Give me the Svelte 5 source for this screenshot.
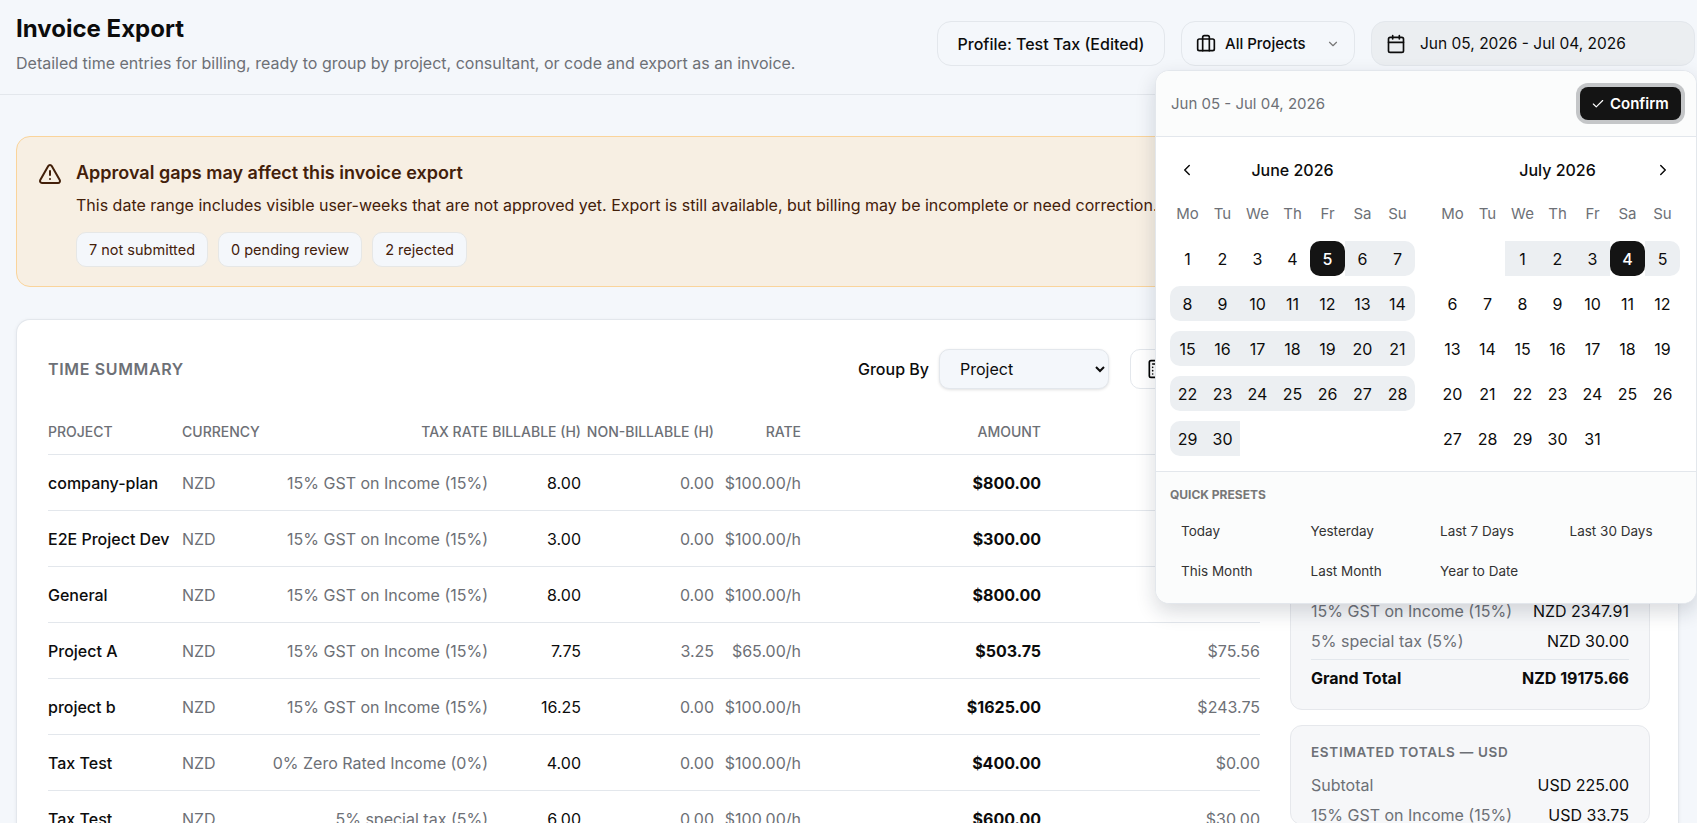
<script lang="ts">
  type Row = { name: string; tax: string; billable: string; nonBillable: string; rate: string; amount: string; taxAmount: string };

  const rows: Row[] = [
    { name: 'company-plan', tax: '15% GST on Income (15%)', billable: '8.00', nonBillable: '0.00', rate: '$100.00/h', amount: '$800.00', taxAmount: '$120.00' },
    { name: 'E2E Project Dev', tax: '15% GST on Income (15%)', billable: '3.00', nonBillable: '0.00', rate: '$100.00/h', amount: '$300.00', taxAmount: '$45.00' },
    { name: 'General', tax: '15% GST on Income (15%)', billable: '8.00', nonBillable: '0.00', rate: '$100.00/h', amount: '$800.00', taxAmount: '$120.00' },
    { name: 'Project A', tax: '15% GST on Income (15%)', billable: '7.75', nonBillable: '3.25', rate: '$65.00/h', amount: '$503.75', taxAmount: '$75.56' },
    { name: 'project b', tax: '15% GST on Income (15%)', billable: '16.25', nonBillable: '0.00', rate: '$100.00/h', amount: '$1625.00', taxAmount: '$243.75' },
    { name: 'Tax Test', tax: '0% Zero Rated Income (0%)', billable: '4.00', nonBillable: '0.00', rate: '$100.00/h', amount: '$400.00', taxAmount: '$0.00' },
    { name: 'Tax Test', tax: '5% special tax (5%)', billable: '6.00', nonBillable: '0.00', rate: '$100.00/h', amount: '$600.00', taxAmount: '$30.00' }
  ];

  const weekdays = ['Mo', 'Tu', 'We', 'Th', 'Fr', 'Sa', 'Su'];
  const presets = ['Today', 'Yesterday', 'Last 7 Days', 'Last 30 Days', 'This Month', 'Last Month', 'Year to Date'];

  // leading = empty cells before the 1st, from/to = selected range
  const months = [
    { title: 'June 2026', leading: 0, days: 30, from: 5, to: 30 },
    { title: 'July 2026', leading: 2, days: 31, from: 1, to: 4 }
  ];

  function cells(m: { leading: number; days: number; from: number; to: number }) {
    const out: { day: number; kind: string }[] = [];
    for (let i = 0; i < m.leading; i++) out.push({ day: 0, kind: 'blank' });
    for (let d = 1; d <= m.days; d++) {
      const col = (m.leading + d - 1) % 7;
      let kind = '';
      if (d > m.from && d < m.to) kind = 'mid';
      if (d === m.from || d === m.to) kind = 'mid';
      if (m.title === 'June 2026' && d === 5) kind = 'sel';
      if (m.title === 'July 2026' && d === 4) kind = 'sel';
      if (m.title === 'July 2026' && d === 5) kind = 'after';
      if (kind === 'mid' && col === 0 && m.title === 'June 2026') kind = 'mid start';
      if (kind === 'mid' && col === 6) kind = 'mid end';
      out.push({ day: d, kind });
    }
    return out;
  }
</script>

<div class="page">
  <header class="topbar">
    <div class="heading">
      <h1>Invoice Export</h1>
      <p>Detailed time entries for billing, ready to group by project, consultant, or code and export as an invoice.</p>
    </div>
    <div class="actions">
      <div class="pill profile">Profile: Test Tax (Edited)</div>
      <div class="pill projects">
        <svg width="20" height="20" viewBox="0 0 24 24" fill="none" stroke="currentColor" stroke-width="2" stroke-linecap="round" stroke-linejoin="round">
          <path d="M16 20V4a2 2 0 0 0-2-2h-4a2 2 0 0 0-2 2v16" />
          <rect x="2" y="6" width="20" height="14" rx="2" />
        </svg>
        <span>All Projects</span>
        <svg class="chev" width="14" height="14" viewBox="0 0 24 24" fill="none" stroke="currentColor" stroke-width="2" stroke-linecap="round" stroke-linejoin="round"><path d="m6 9 6 6 6-6" /></svg>
      </div>
      <div class="pill dates">
        <svg width="20" height="20" viewBox="0 0 24 24" fill="none" stroke="currentColor" stroke-width="2" stroke-linecap="round" stroke-linejoin="round">
          <path d="M8 2v4" /><path d="M16 2v4" />
          <rect x="3" y="4" width="18" height="18" rx="2" />
          <path d="M3 10h18" />
        </svg>
        <span>Jun 05, 2026 - Jul 04, 2026</span>
      </div>
    </div>
  </header>

  <main class="content">
    <section class="alert">
      <svg class="alert-icon" width="24" height="24" viewBox="0 0 24 24" fill="none" stroke="currentColor" stroke-width="2" stroke-linecap="round" stroke-linejoin="round">
        <path d="m21.73 18-8-14a2 2 0 0 0-3.48 0l-8 14A2 2 0 0 0 4 21h16a2 2 0 0 0 1.73-3" />
        <path d="M12 9v4" /><path d="M12 17h.01" />
      </svg>
      <div class="alert-body">
        <h2>Approval gaps may affect this invoice export</h2>
        <p>This date range includes visible user-weeks that are not approved yet. Export is still available, but billing may be incomplete or need correction.</p>
        <div class="chips">
          <span>7 not submitted</span>
          <span>0 pending review</span>
          <span>2 rejected</span>
        </div>
      </div>
    </section>

    <section class="card">
      <div class="card-main">
        <div class="card-head">
          <h3>TIME SUMMARY</h3>
          <div class="tools">
            <label for="group-by">Group By</label>
            <select id="group-by">
              <option>Project</option>
              <option>Consultant</option>
              <option>Code</option>
            </select>
            <button class="export" type="button">
              <svg width="20" height="20" viewBox="0 0 24 24" fill="none" stroke="currentColor" stroke-width="2" stroke-linecap="round" stroke-linejoin="round">
                <rect x="4" y="2" width="16" height="20" rx="2" />
                <path d="M8 10h.01M12 10h.01M16 10h.01M8 14h.01M12 14h.01M16 14h.01M8 18h.01M12 18h.01M16 18h.01M8 6h8" />
              </svg>
              Export
            </button>
          </div>
        </div>

        <table>
          <colgroup>
            <col style="width: 134px" /><col style="width: 60px" /><col style="width: 246px" /><col style="width: 93px" />
            <col style="width: 133px" /><col style="width: 87px" /><col style="width: 240px" /><col style="width: 219px" />
          </colgroup>
          <thead>
            <tr>
              <th class="left">PROJECT</th>
              <th class="left">CURRENCY</th>
              <th>TAX RATE</th>
              <th>BILLABLE (H)</th>
              <th>NON-BILLABLE (H)</th>
              <th>RATE</th>
              <th>AMOUNT</th>
              <th>TAX</th>
            </tr>
          </thead>
          <tbody>
            {#each rows as r}
              <tr>
                <td class="left name">{r.name}</td>
                <td class="left muted">NZD</td>
                <td class="muted">{r.tax}</td>
                <td>{r.billable}</td>
                <td class="muted">{r.nonBillable}</td>
                <td class="muted">{r.rate}</td>
                <td class="strong">{r.amount}</td>
                <td class="muted">{r.taxAmount}</td>
              </tr>
            {/each}
          </tbody>
        </table>
      </div>

      <aside class="totals">
        <div class="panel">
          <h4>ESTIMATED TOTALS — NZD</h4>
          <div class="line"><span>Subtotal</span><b>NZD 16797.75</b></div>
          <div class="line"><span>15% GST on Income (15%)</span><b>NZD 2347.91</b></div>
          <div class="line"><span>5% special tax (5%)</span><b>NZD 30.00</b></div>
          <div class="line grand"><span>Grand Total</span><b>NZD 19175.66</b></div>
        </div>
        <div class="panel">
          <h4>ESTIMATED TOTALS — USD</h4>
          <div class="line"><span>Subtotal</span><b>USD 225.00</b></div>
          <div class="line"><span>15% GST on Income (15%)</span><b>USD 33.75</b></div>
        </div>
      </aside>
    </section>
  </main>

  <div class="popover">
    <div class="pop-head">
      <span>Jun 05 - Jul 04, 2026</span>
      <button class="confirm" type="button">
        <svg width="14" height="14" viewBox="0 0 24 24" fill="none" stroke="currentColor" stroke-width="2" stroke-linecap="round" stroke-linejoin="round"><path d="M20 6 9 17l-5-5" /></svg>
        Confirm
      </button>
    </div>

    <div class="months">
      {#each months as m, i}
        <div class="month">
          <div class="month-title">
            {#if i === 0}
              <svg class="nav prev" width="18" height="18" viewBox="0 0 24 24" fill="none" stroke="currentColor" stroke-width="2" stroke-linecap="round" stroke-linejoin="round"><path d="m15 18-6-6 6-6" /></svg>
            {:else}
              <svg class="nav next" width="18" height="18" viewBox="0 0 24 24" fill="none" stroke="currentColor" stroke-width="2" stroke-linecap="round" stroke-linejoin="round"><path d="m9 18 6-6-6-6" /></svg>
            {/if}
            {m.title}
          </div>
          <div class="grid">
            {#each weekdays as w}
              <div class="dow">{w}</div>
            {/each}
            {#each cells(m) as c}
              <div class="day {c.kind}">{c.day || ''}</div>
            {/each}
          </div>
        </div>
      {/each}
    </div>

    <div class="presets">
      <div class="presets-label">QUICK PRESETS</div>
      <div class="preset-grid">
        {#each presets as p}
          <button type="button">{p}</button>
        {/each}
      </div>
    </div>
  </div>
</div>

<style>
  :global(body) {
    margin: 0;
    background: #f4f7fb;
    overflow: hidden;
  }

  .page {
    position: relative;
    height: 823px;
    overflow: hidden;
    font-family: Inter, 'Liberation Sans', sans-serif;
    color: #0c0c0c;
    background: #f4f7fb;
  }

  .topbar {
    display: flex;
    justify-content: space-between;
    height: 95px;
    box-sizing: border-box;
    padding: 0 2px 0 16px;
    border-bottom: 1px solid #e3e7ec;
  }

  h1 {
    margin: 14px 0 0;
    font-size: 24px;
    line-height: 30px;
    font-weight: 700;
  }

  .heading p {
    margin: 9px 0 0;
    font-size: 16px;
    line-height: 20px;
    color: #6d7076;
  }

  .actions {
    display: flex;
    gap: 16px;
    padding-top: 21px;
  }

  .pill {
    display: flex;
    align-items: center;
    height: 45px;
    box-sizing: border-box;
    border: 1px solid #e3e7ec;
    border-radius: 14px;
    font-size: 15.5px;
    font-weight: 500;
  }

  .profile {
    width: 228px;
    justify-content: center;
    font-size: 16px;
  }

  .projects {
    width: 174px;
    padding: 0 14px;
    gap: 9px;
    font-size: 15px;
  }

  .chev {
    margin-left: auto;
    color: #777;
  }

  .dates {
    width: 324px;
    padding: 0 14px;
    gap: 14px;
    background: #ebeef1;
    font-weight: 400;
  }

  .content {
    padding: 41px 18px 0 16px;
  }

  .alert {
    display: flex;
    gap: 14px;
    height: 151px;
    box-sizing: border-box;
    padding: 24px 21px;
    background: #f7efe3;
    border: 1px solid #fad49b;
    border-radius: 14px;
    color: #43200a;
  }

  .alert-icon {
    flex: none;
    margin-top: 1px;
  }

  .alert-body h2 {
    margin: 0;
    font-size: 18px;
    line-height: 24px;
    font-weight: 600;
  }

  .alert-body p {
    margin: 9px 0 0;
    font-size: 16px;
    line-height: 22px;
    white-space: nowrap;
  }

  .chips {
    display: flex;
    gap: 10px;
    margin-top: 16px;
  }

  .chips span {
    display: flex;
    align-items: center;
    height: 35px;
    box-sizing: border-box;
    padding: 0 12px;
    background: #f4f7fb;
    border: 1px solid #e6e7e6;
    border-radius: 10px;
    font-size: 14.5px;
    color: #43200a;
  }

  .card {
    display: flex;
    gap: 30px;
    margin-top: 32px;
    padding: 0 30px 0 31px;
    height: 520px;
    background: #fff;
    border: 1px solid #e3e7ec;
    border-bottom: 0;
    border-radius: 14px 14px 0 0;
    box-shadow: 0 1px 4px rgba(20, 30, 50, 0.06);
  }

  .card-main {
    width: 1212px;
    flex: none;
  }

  .card-head {
    display: flex;
    align-items: center;
    justify-content: space-between;
    height: 40px;
    margin-top: 29px;
  }

  .card-head h3 {
    margin: 0;
    font-size: 16px;
    font-weight: 600;
    letter-spacing: 0.64px;
    color: #6d7076;
  }

  .tools {
    display: flex;
    align-items: center;
    gap: 10px;
    font-size: 16px;
    font-weight: 500;
  }

  select {
    width: 170px;
    height: 40px;
    padding: 0 16px;
    font: inherit;
    font-weight: 400;
    color: inherit;
    background: #f4f7fb;
    border: 1px solid #e3e7ec;
    border-radius: 10px;
    box-shadow: 0 1px 3px rgba(0, 0, 0, 0.12);
  }

  .export {
    display: flex;
    align-items: center;
    gap: 8px;
    height: 40px;
    width: 130px;
    margin-left: 11px;
    padding: 0 15px;
    font: inherit;
    background: #fff;
    border: 1px solid #e3e7ec;
    border-radius: 10px;
  }

  table {
    border-collapse: collapse;
    table-layout: fixed;
    width: 1212px;
    margin-top: 20px;
  }

  th {
    height: 45px;
    padding: 0;
    text-align: right;
    font-size: 14px;
    font-weight: 500;
    color: #6d7076;
    white-space: nowrap;
    border-bottom: 1px solid #e3e7ec;
  }

  td {
    height: 55px;
    padding: 0;
    text-align: right;
    font-size: 16px;
    white-space: nowrap;
    border-bottom: 1px solid #e3e7ec;
  }

  .left {
    text-align: left;
  }

  .name {
    font-weight: 500;
  }

  .muted {
    color: #6d7076;
  }

  .strong {
    font-weight: 700;
  }

  .totals {
    width: 360px;
    flex: none;
    display: flex;
    flex-direction: column;
    justify-content: flex-end;
    gap: 15px;
    height: 504px;
  }

  .panel {
    box-sizing: border-box;
    padding: 14px 20px 13px;
    background: #f6f7f9;
    border: 1px solid #e6e8ec;
    border-radius: 12px;
  }

  .panel:last-child {
    height: 100px;
    margin-bottom: -1px;
    flex: none;
  }

  .panel h4 {
    margin: 0 0 6px;
    font-size: 13.5px;
    line-height: 24px;
    font-weight: 600;
    letter-spacing: 0.7px;
    color: #6d7076;
  }

  .line {
    display: flex;
    justify-content: space-between;
    align-items: center;
    height: 30px;
    font-size: 16px;
    color: #6d7076;
  }

  .line b {
    font-weight: 400;
    color: #0c0c0c;
  }

  .grand {
    margin-top: 3px;
    height: 36px;
    border-top: 1px solid #e3e7ec;
    font-weight: 700;
    color: #0c0c0c;
  }

  .grand b {
    font-weight: 700;
  }

  .popover {
    position: absolute;
    left: 1155px;
    top: 70px;
    width: 542px;
    height: 534px;
    box-sizing: border-box;
    background: #fff;
    border: 1px solid #e3e7ec;
    border-radius: 14px;
    box-shadow: 0 8px 20px rgba(20, 30, 50, 0.16);
    overflow: hidden;
  }

  .pop-head {
    display: flex;
    align-items: center;
    justify-content: space-between;
    height: 66px;
    box-sizing: border-box;
    padding: 0 15px;
    background: #fbfcfc;
    border-bottom: 1px solid #e3e7ec;
    font-size: 15px;
    color: #6d7076;
  }

  .confirm {
    display: flex;
    align-items: center;
    gap: 5px;
    width: 101px;
    height: 33px;
    padding: 0 0 0 11px;
    box-sizing: border-box;
    font: inherit;
    font-size: 15px;
    font-weight: 600;
    color: #fff;
    background: #141414;
    border: 0;
    border-radius: 8px;
    box-shadow: 0 0 0 4px #c4c6c8;
  }

  .months {
    display: flex;
    gap: 20px;
    padding: 0 15px 0 14px;
  }

  .month {
    width: 245px;
  }

  .month-title {
    position: relative;
    height: 66px;
    line-height: 66px;
    text-align: center;
    font-size: 16px;
    font-weight: 500;
  }

  .nav {
    position: absolute;
    top: 24px;
  }

  .prev {
    left: 8px;
  }

  .next {
    right: 8px;
  }

  .grid {
    display: grid;
    grid-template-columns: repeat(7, 35px);
    grid-auto-rows: 35px;
    row-gap: 10px;
    margin-top: -7px;
  }

  .dow {
    display: flex;
    align-items: center;
    justify-content: center;
    font-size: 15px;
    color: #6d7076;
  }

  .day {
    display: flex;
    align-items: center;
    justify-content: center;
    font-size: 16px;
  }

  .mid {
    background: #eceff2;
  }

  .start {
    border-radius: 10px 0 0 10px;
  }

  .end {
    border-radius: 0 10px 10px 0;
  }

  .sel {
    background: #141414;
    color: #fff;
    font-weight: 500;
    border-radius: 10px;
  }

  .after {
    background: #eceff2;
    border-radius: 0 10px 10px 0;
  }

  .presets {
    height: 132px;
    margin-top: 15px;
    box-sizing: border-box;
    padding: 15px 14px;
    background: #fbfcfc;
    border-top: 1px solid #e3e7ec;
  }

  .presets-label {
    font-size: 12px;
    line-height: 16px;
    font-weight: 700;
    color: #777;
  }

  .preset-grid {
    display: grid;
    grid-template-columns: repeat(4, 1fr);
    column-gap: 6px;
    row-gap: 8px;
    margin-top: 12px;
  }

  .preset-grid button {
    height: 32px;
    padding: 0 11px;
    text-align: left;
    font: inherit;
    font-size: 13.5px;
    color: #333;
    background: none;
    border: 0;
  }
</style>
